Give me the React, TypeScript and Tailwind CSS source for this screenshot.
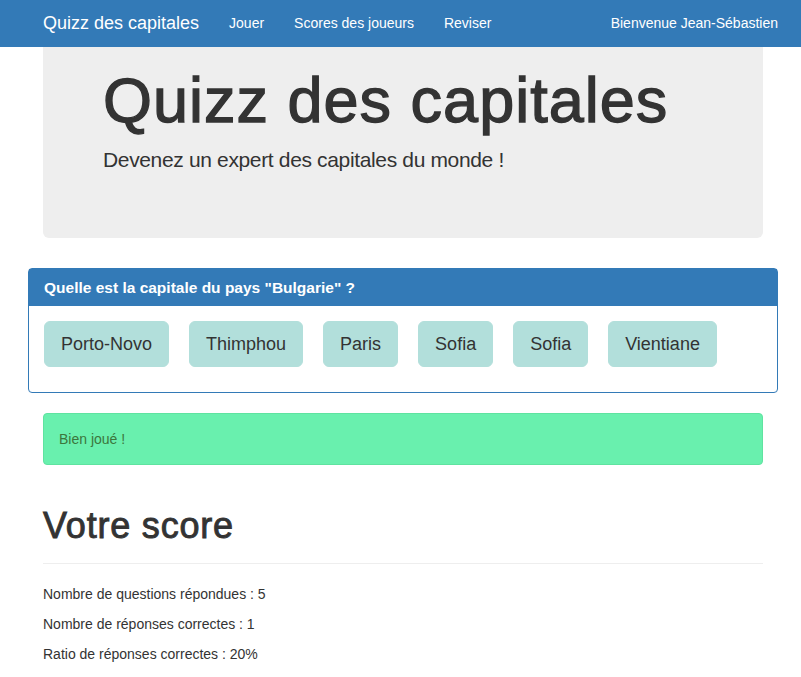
import * as React from "react";

const answers = ["Porto-Novo", "Thimphou", "Paris", "Sofia", "Sofia", "Vientiane"];

const App = () => {
  return (
    <div className="min-h-[677px] bg-white text-[#333] font-['Liberation_Sans',Arial,sans-serif] text-[14px] leading-[20px]">
      <nav className="h-[47px] bg-[#337ab7]">
        <div className="w-[750px] ml-[28px] flex items-center h-full pb-[2px]">
          <a className="px-[15px] text-[18px] text-white">Quizz des capitales</a>
          <ul className="flex">
            <li><a className="px-[15px] text-white">Jouer</a></li>
            <li><a className="px-[15px] text-white">Scores des joueurs</a></li>
            <li><a className="px-[15px] text-white">Reviser</a></li>
          </ul>
          <span className="ml-auto text-white">Bienvenue Jean-Sébastien</span>
        </div>
      </nav>

      <div className="w-[750px] ml-[28px]">
        <div className="mx-[15px] bg-[#eee] rounded-b-[6px] pl-[60px] pr-[60px] pt-[19px] pb-[48px]">
          <h1 className="text-[63px] leading-[69px] mb-[10px] tracking-[1px] [-webkit-text-stroke:1.3px_#333]">
            Quizz des capitales
          </h1>
          <p className="text-[21px] leading-[30px] font-light mb-[15px] tracking-[-0.35px]">
            Devenez un expert des capitales du monde !
          </p>
        </div>

        <div className="mt-[30px] border border-[#337ab7] rounded-[4px]">
          <div className="bg-[#337ab7] text-white font-bold text-[15.5px] px-[15px] h-[37px] flex items-center">
            Quelle est la capitale du pays "Bulgarie" ?
          </div>
          <div className="flex gap-[20px] pl-[15px] pt-[15px] pb-[25px]">
            {answers.map((a, i) => (
              <button
                key={i}
                className="bg-[#b2dfdb] border border-[#b2dfdb] rounded-[6px] px-[16px] py-[10px] text-[18px] leading-[24px] text-[#333]"
              >
                {a}
              </button>
            ))}
          </div>
        </div>

        <div className="mx-[15px] mt-[20px] bg-[#69f0ae] border border-[#5fe3a0] rounded-[4px] p-[15px] text-[#3c763d]">
          Bien joué !
        </div>

        <div className="mx-[15px]">
          <div className="mt-[41px] pb-[17px] border-b border-[#eee]">
            <h1 className="text-[36px] leading-[40px] font-medium tracking-[0.8px] [-webkit-text-stroke:0.9px_#333]">
              Votre score
            </h1>
          </div>
          <div className="mt-[20px]">
            <p className="mb-[10px]">Nombre de questions répondues : 5</p>
            <p className="mb-[10px]">Nombre de réponses correctes : 1</p>
            <p className="mb-[10px]">Ratio de réponses correctes : 20%</p>
          </div>
        </div>
      </div>
    </div>
  );
};

export default App;
